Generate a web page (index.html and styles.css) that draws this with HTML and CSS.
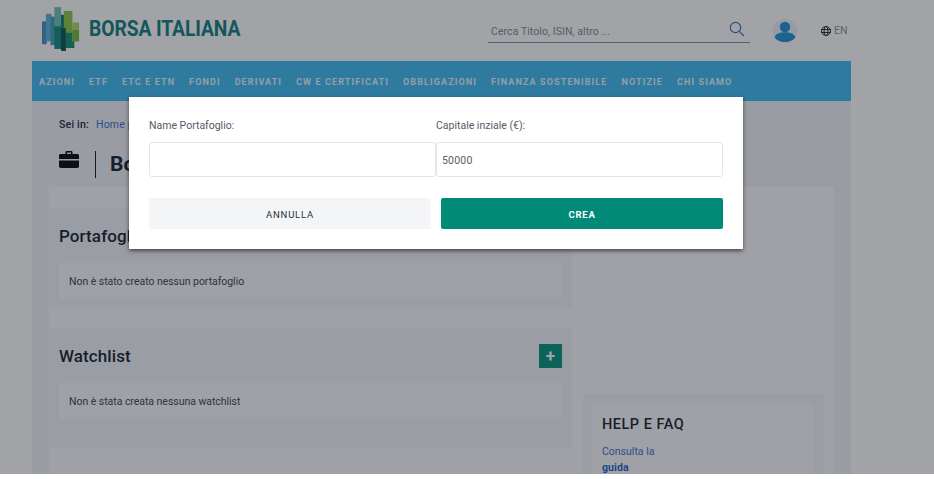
FILE: index.html
```html
<!DOCTYPE html>
<html lang="it">
<head>
<meta charset="utf-8">
<title>Borsa Italiana</title>
<link rel="stylesheet" href="styles.css">
</head>
<body>
<div class="page">
  <div class="shell">
    <header class="header">
      <a class="logo">
        <svg class="logo-mark" width="38" height="46" viewBox="0 0 40 46">
          <rect x="0" y="15" width="5" height="24" fill="#3f8fc0"/>
          <rect x="4" y="7" width="6" height="29" fill="#5ab0dc"/>
          <rect x="9" y="10" width="5" height="30" fill="#3aa0b0"/>
          <rect x="13" y="0" width="7" height="20" fill="#6fc0c0"/>
          <rect x="13" y="20" width="7" height="24" fill="#0c8a86"/>
          <rect x="20" y="8" width="5" height="38" fill="#0a7a70"/>
          <rect x="23" y="4" width="9" height="26" fill="#8cc63f"/>
          <rect x="25" y="27" width="9" height="16" fill="#0e8c6c"/>
          <rect x="32" y="16" width="7" height="20" fill="#b5d56a"/>
          <rect x="32" y="24" width="7" height="12" fill="#6fb83c"/>
          <rect x="20" y="22" width="5" height="24" fill="#07504f"/>
        </svg>
        <span class="logo-text">BORSA ITALIANA</span>
      </a>
      <div class="search">
        <span class="search-text">Cerca Titolo, ISIN, altro ...</span>
        <svg class="search-icon" width="16" height="16" viewBox="0 0 16 16" fill="none" stroke="#2d6fc4" stroke-width="1.2">
          <circle cx="6.5" cy="6.5" r="5.2"/>
          <path d="M10.3 10.3 15 15"/>
        </svg>
      </div>
      <svg class="user" width="24" height="24" viewBox="0 0 24 24">
        <circle cx="12" cy="12" r="12" fill="#e8f1f8"/>
        <circle cx="12" cy="8" r="5.2" fill="#1c8fd0"/>
        <path d="M1.5 18c2-4 6-4.8 10.500-4.800S20.500 14 22.500 18c-2 3.500-6 5-10.500 5s-8.500-1.500-10.500-5z" fill="#1c8fd0"/>
      </svg>
      <div class="lang">
        <svg width="10" height="10" viewBox="0 0 10 10" fill="none" stroke="#111" stroke-width=".9">
          <circle cx="5" cy="5" r="4.500"/>
          <ellipse cx="5" cy="5" rx="2" ry="4.500"/>
          <path d="M.5 3.500h9M.5 6.500h9"/>
        </svg>
        <span>EN</span>
      </div>
    </header>

    <nav class="nav">
      <a>AZIONI</a><a>ETF</a><a>ETC E ETN</a><a>FONDI</a><a>DERIVATI</a><a>CW E CERTIFICATI</a><a>OBBLIGAZIONI</a><a>FINANZA SOSTENIBILE</a><a>NOTIZIE</a><a>CHI SIAMO</a>
    </nav>

    <main class="main">
      <div class="crumbs"><b>Sei in:</b><a>Home page</a></div>
      <div class="title-row">
        <svg class="case" width="20" height="17" viewBox="0 0 20 17">
          <path d="M6.500 3V1.200C6.500.5 7 0 7.700 0h4.600c.7 0 1.200.5 1.200 1.200V3H12V1.500H8V3z" fill="#000"/>
          <path d="M1.500 3h17c.8 0 1.500.7 1.500 1.500V8H0V4.500C0 3.700.7 3 1.500 3z" fill="#000"/>
          <path d="M0 9.500h20v5.800c0 .9-.8 1.700-1.700 1.700H1.700C.8 17 0 16.200 0 15.300z" fill="#000"/>
        </svg>
        <h1 class="title">Borsa Virtuale</h1>
      </div>
      <div class="panel">
        <div class="left">
          <section class="box box-first">
            <div class="box-head">
              <h2>Portafoglio</h2>
              <span class="add">+</span>
            </div>
            <div class="card">Non è stato creato nessun portafoglio</div>
          </section>
          <section class="box box-second">
            <div class="box-head">
              <h2>Watchlist</h2>
              <span class="add">+</span>
            </div>
            <div class="card">Non è stata creata nessuna watchlist</div>
          </section>
        </div>
        <aside class="right">
          <div class="help">
            <div class="help-inner">
              <h3>HELP E FAQ</h3>
              <p>Consulta la</p>
              <a>guida</a>
            </div>
          </div>
        </aside>
      </div>
    </main>
  </div>

  <div class="overlay"></div>
  <div class="modal">
    <div class="fields">
      <label class="field">
        <span class="field-label">Name Portafoglio:</span>
        <span class="input"></span>
      </label>
      <label class="field">
        <span class="field-label">Capitale inziale (€):</span>
        <span class="input">50000</span>
      </label>
    </div>
    <div class="actions">
      <button class="btn btn-cancel">ANNULLA</button>
      <button class="btn btn-ok">CREA</button>
    </div>
  </div>
</div>
</body>
</html>
```
FILE: styles.css
```css
* { box-sizing: border-box; }
html, body { margin: 0; padding: 0; background: #fff; }
body { font-family: Roboto, "Liberation Sans", sans-serif; }
h1, h2, h3, p { margin: 0; }

.page { position: relative; height: 474px; overflow: hidden; background: #fff; }
.shell { width: 819px; margin-left: 32px; }

.header { height: 61px; display: flex; align-items: center; padding-left: 10px; }
.logo { display: flex; align-items: center; gap: 9px; width: 446px; margin-top: -4px; }
.logo-mark { flex: none; }
.logo-text { font-size: 22px; font-weight: 700; color: #0b7a7e; white-space: nowrap; letter-spacing: -.1px; transform: scaleX(.875); transform-origin: left center; }

.search { width: 262px; height: 24px; margin-top: 0; border-bottom: 1px solid #7e8aa0; display: flex; justify-content: space-between; align-items: center; padding: 3px 5px 0 3px; }
.search-text { font-size: 10.500px; letter-spacing: .07px; color: #7f8590; }
.search-icon { margin-top: -6px; }
.user { margin-left: 23px; flex: none; }
.lang { display: flex; align-items: center; gap: 3px; margin-left: 24px; font-size: 10.500px; color: #8a8f99; }

.nav { height: 40px; background: #3bb9f1; display: flex; align-items: center; gap: 14px; padding: 1px 7px 0; }
.nav a { font-size: 9px; font-weight: 700; letter-spacing: 1.110px; color: #fff; white-space: nowrap; opacity: .88; }

.main { background: #f1f3f8; padding: 0 17px; height: 373px; }
.crumbs { display: flex; gap: 7px; padding: 17px 0 0 10px; font-size: 10.500px; height: 40px; letter-spacing: .2px; }
.crumbs b { font-weight: 500; color: #1c2233; }
.crumbs a { color: #2f6fd0; }
.title-row { display: flex; align-items: center; height: 46px; padding: 0 0 0 10px; }
.case { margin-top: -10px; }
.title { font-size: 21px; font-weight: 700; color: #111a2c; border-left: 1px solid #111; margin-left: 16px; padding-left: 14px; line-height: 27px; height: 27px; }

.panel { background: #fcfcfd; display: grid; grid-template-columns: 523px 1fr; height: 287px; overflow: hidden; }
.left { padding-top: 21px; display: flex; flex-direction: column; gap: 20px; }
.box { background: #f3f5f8; padding: 0 10px; }
.box-first { height: 100px; padding-top: 16px; }
.box-second { height: 120px; padding-top: 16px; }
.box-head { display: flex; justify-content: space-between; align-items: center; height: 24px; }
.box-head h2 { font-size: 17px; font-weight: 500; color: #111a2c; letter-spacing: .1px; }
.add { width: 23px; height: 24px; background: #008f7a; color: #fff; font-size: 17px; font-weight: 700; display: flex; align-items: center; justify-content: center; line-height: 1; }
.card { background: #fcfcfd; height: 36px; margin-top: 15px; padding-left: 10px; display: flex; align-items: center; font-size: 10.500px; letter-spacing: -.04px; color: #3a404c; }

.right { padding: 207px 10px 0 11px; }
.help { background: #f3f5f8; padding: 10px 10px 0 9px; height: 100px; }
.help-inner { background: #fcfcfd; padding: 13px 10px 0; height: 100px; }
.help-inner h3 { font-size: 14.500px; font-weight: 500; letter-spacing: .5px; color: #111a2c; line-height: 16px; }
.help-inner p { font-size: 10.500px; letter-spacing: 0; color: #2f6fd0; margin-top: 12px; line-height: 14px; }
.help-inner a { display: block; font-size: 10.500px; font-weight: 700; letter-spacing: .1px; color: #1a5fcc; margin-top: 2px; line-height: 14px; }

.overlay { position: absolute; inset: 0; background: rgba(30, 35, 45, .42); }
.modal { position: absolute; left: 129px; top: 97px; width: 614px; height: 152px; background: #fff; padding: 20px; box-shadow: 0 2px 4px rgba(0, 0, 0, .55); }
.fields { display: grid; grid-template-columns: 287px 287px; }
.field { display: block; }
.field-label { display: block; font-size: 10.500px; letter-spacing: 0; color: #555a66; line-height: 16px; padding-top: 1px; height: 16px; }
.input { display: block; height: 35px; margin-top: 9px; border: 1px solid #e3e5e8; border-radius: 3px; background: #fff; padding-left: 5px; font-size: 10.500px; letter-spacing: .2px; line-height: 35px; color: #555a66; }
.actions { display: grid; grid-template-columns: 282px 282px; gap: 10px; margin-top: 21px; }
.btn { height: 31px; border: 0; border-radius: 2px; font-family: inherit; font-size: 9.500px; padding: 1px 0 0; }
.btn-cancel { background: #f4f5f7; color: #2a2f3a; font-weight: 400; letter-spacing: .8px; }
.btn-ok { background: #008a77; color: #fff; font-weight: 700; letter-spacing: .8px; }
```
